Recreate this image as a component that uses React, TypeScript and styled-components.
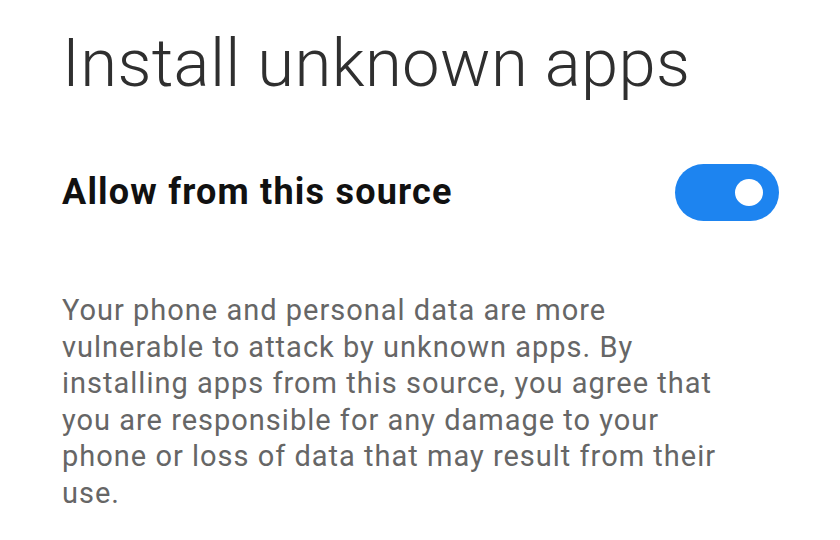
import styled, { createGlobalStyle } from 'styled-components';

const GlobalStyle = createGlobalStyle`
  html, body {
    margin: 0;
    padding: 0;
    background: #ffffff;
  }
  body {
    font-family: Roboto, "Liberation Sans", sans-serif;
  }
`;

const Page = styled.div`
  width: 840px;
  height: 540px;
  box-sizing: border-box;
  padding: 23px 62px 0 62px;
  overflow: hidden;
`;

const Title = styled.h1`
  margin: 0;
  font-weight: 300;
  font-size: 67px;
  line-height: 80px;
  color: #2f2f2f;
  letter-spacing: 0.35px;
`;

const SettingRow = styled.div`
  display: flex;
  align-items: center;
  justify-content: space-between;
  margin-top: 60px;
  height: 58px;
`;

const SettingLabel = styled.span`
  font-weight: 700;
  font-size: 36px;
  color: #111111;
  letter-spacing: 1.2px;
`;

const Toggle = styled.div<{ $on: boolean }>`
  position: relative;
  width: 104px;
  height: 57px;
  border-radius: 29px;
  margin-right: -1px;
  background: ${(p) => (p.$on ? '#1d84f0' : '#cfcfcf')};
`;

const Knob = styled.span<{ $on: boolean }>`
  position: absolute;
  top: 15px;
  left: ${(p) => (p.$on ? '60px' : '16px')};
  width: 28px;
  height: 27px;
  border-radius: 50%;
  background: #ffffff;
`;

const Description = styled.p`
  margin: 71px 0 0 0;
  font-size: 29px;
  line-height: 36.6px;
  letter-spacing: 1px;
  color: #666666;
`;

export default function App() {
  const allowed = true;
  return (
    <>
      <GlobalStyle />
      <Page>
        <Title>Install unknown apps</Title>
        <SettingRow>
          <SettingLabel>Allow from this source</SettingLabel>
          <Toggle $on={allowed}>
            <Knob $on={allowed} />
          </Toggle>
        </SettingRow>
        <Description>
          Your phone and personal data are more
          <br />
          vulnerable to attack by unknown apps. By
          <br />
          installing apps from this source, you agree that
          <br />
          you are responsible for any damage to your
          <br />
          phone or loss of data that may result from their
          <br />
          use.
        </Description>
      </Page>
    </>
  );
}
